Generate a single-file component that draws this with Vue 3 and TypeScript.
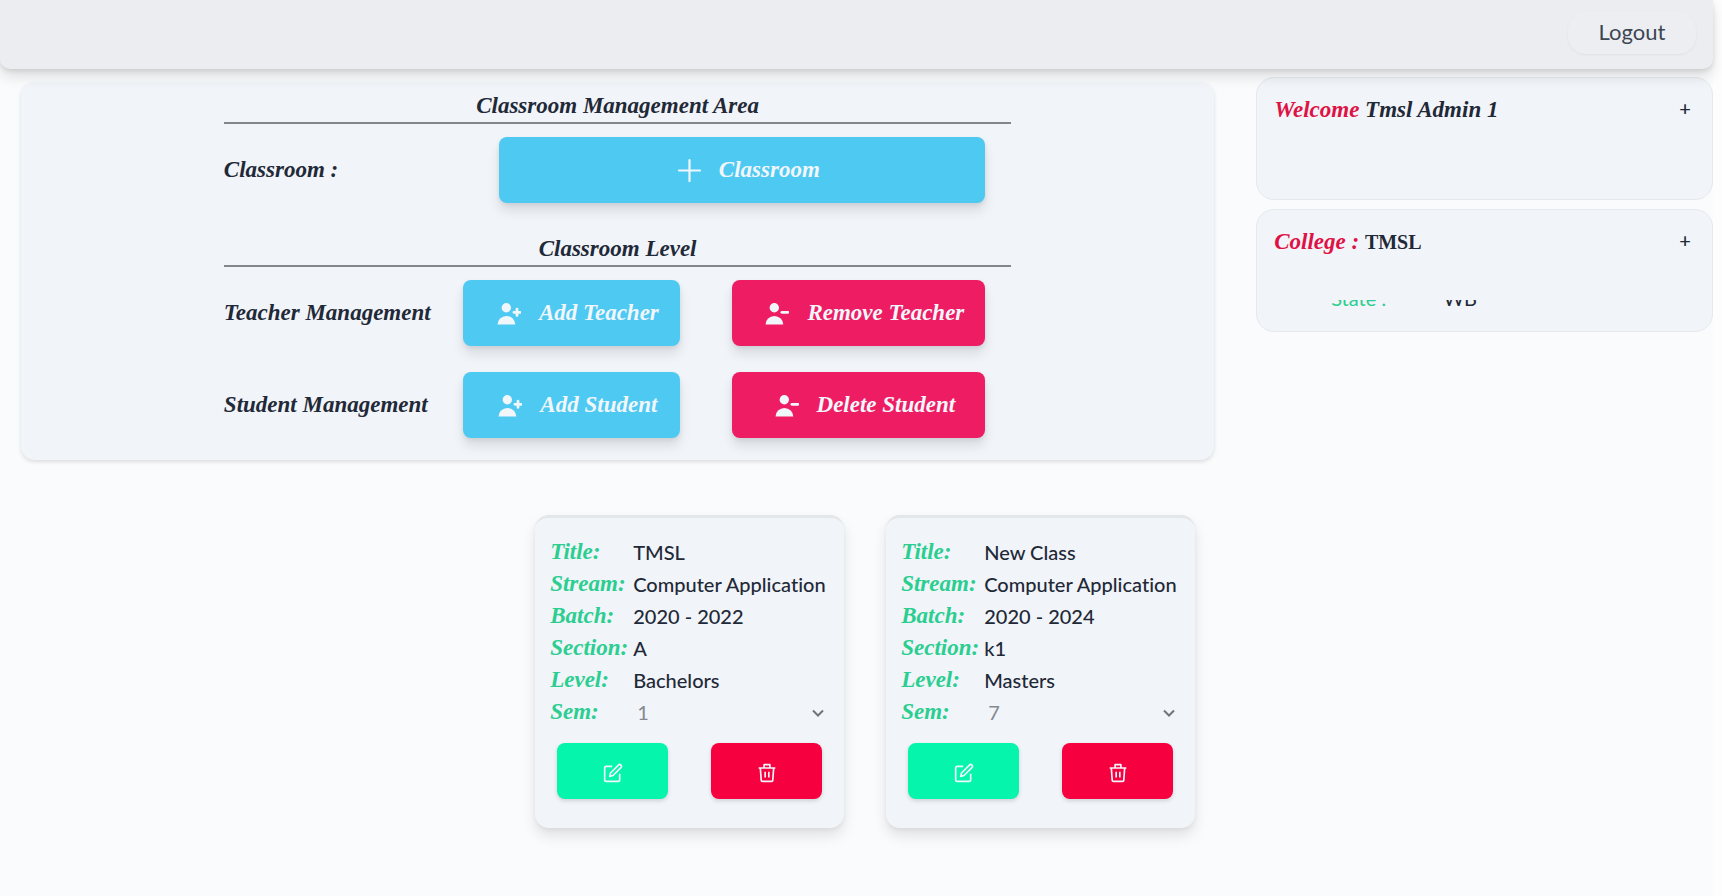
<script setup lang="ts">
import { ref } from 'vue'

interface Classroom {
  id: number
  title: string
  stream: string
  batch: string
  section: string
  level: string
  sem: number
}

const semesters = [1, 2, 3, 4, 5, 6, 7, 8]

const classrooms = ref<Classroom[]>([
  { id: 1, title: 'TMSL', stream: 'Computer Application', batch: '2020 - 2022', section: 'A', level: 'Bachelors', sem: 1 },
  { id: 2, title: 'New Class', stream: 'Computer Application', batch: '2020 - 2024', section: 'k1', level: 'Masters', sem: 7 },
])

const management = [
  { label: 'Teacher Management', add: 'Add Teacher', remove: 'Remove Teacher' },
  { label: 'Student Management', add: 'Add Student', remove: 'Delete Student' },
]
</script>

<template>
  <div class="page">
    <header class="topbar">
      <button type="button" class="logout">Logout</button>
    </header>

    <div class="columns">
      <main class="content">
        <section class="panel">
          <div class="panel-inner">
            <h2 class="heading">Classroom Management Area</h2>
            <div class="row">
              <span class="row-label">Classroom :</span>
              <button type="button" class="action add wide">
                <svg class="icon" viewBox="0 0 24 24" aria-hidden="true">
                  <path d="M12.500 2v21M2 12.500h21" fill="none" stroke="currentColor" stroke-width="2.200" stroke-linecap="round" />
                </svg>
                Classroom
              </button>
            </div>

            <h2 class="heading">Classroom Level</h2>
            <div v-for="item in management" :key="item.label" class="row">
              <span class="row-label">{{ item.label }}</span>
              <button type="button" class="action add">
                <svg class="icon" viewBox="0 0 24 24" aria-hidden="true">
                  <circle cx="9.300" cy="6.700" r="4.700" />
                  <path d="M.5 23.500a8.900 8.600 0 0 1 17.800 0z" />
                  <path d="M20 8.200v6.200M16.900 11.300h6.200" stroke="currentColor" stroke-width="2.800" stroke-linecap="round" />
                </svg>
                {{ item.add }}
              </button>
              <button type="button" class="action remove">
                <svg class="icon" viewBox="0 0 24 24" aria-hidden="true">
                  <circle cx="9.300" cy="6.700" r="4.700" />
                  <path d="M.5 23.500a8.900 8.600 0 0 1 17.800 0z" />
                  <path d="M16.900 11.300h6" stroke="currentColor" stroke-width="2.800" stroke-linecap="round" />
                </svg>
                {{ item.remove }}
              </button>
            </div>
          </div>
        </section>

        <section class="cards">
          <article v-for="room in classrooms" :key="room.id" class="card">
            <dl class="facts">
              <dt>Title:</dt><dd>{{ room.title }}</dd>
              <dt>Stream:</dt><dd>{{ room.stream }}</dd>
              <dt>Batch:</dt><dd>{{ room.batch }}</dd>
              <dt>Section:</dt><dd>{{ room.section }}</dd>
              <dt>Level:</dt><dd>{{ room.level }}</dd>
              <dt><label :for="`sem-${room.id}`">Sem:</label></dt>
              <dd class="select-wrap">
                <select :id="`sem-${room.id}`" v-model="room.sem">
                  <option v-for="n in semesters" :key="n" :value="n">{{ n }}</option>
                </select>
                <svg class="chevron" viewBox="0 0 12 12" aria-hidden="true">
                  <path d="M1 3.500 6 8.500l5-5" fill="none" stroke="currentColor" stroke-width="2" />
                </svg>
              </dd>
            </dl>
            <div class="card-actions">
              <button type="button" class="square edit" aria-label="Edit classroom">
                <svg viewBox="0 0 24 24" aria-hidden="true">
                  <path d="M11 4H4a2 2 0 0 0-2 2v14a2 2 0 0 0 2 2h14a2 2 0 0 0 2-2v-7" />
                  <path d="M18.500 2.500a2.100 2.100 0 0 1 3 3L12 15l-4 1 1-4z" />
                </svg>
              </button>
              <button type="button" class="square delete" aria-label="Delete classroom">
                <svg viewBox="0 0 24 24" aria-hidden="true">
                  <path d="M2 6h20M4 6l1 14a2 2 0 0 0 2 2h10a2 2 0 0 0 2-2l1-14M8.500 6V2h7v4M9.800 10.500v7M14.200 10.500v7" />
                </svg>
              </button>
            </div>
          </article>
        </section>
      </main>

      <aside class="side">
        <section class="info">
          <div class="info-head">
            <h3><em>Welcome</em> Tmsl Admin 1</h3>
            <button type="button" class="expand" aria-label="Show profile">+</button>
          </div>
        </section>
        <section class="info">
          <div class="info-head">
            <h3><em>College :</em> <span class="upright">TMSL</span></h3>
            <button type="button" class="expand" aria-label="Show college">+</button>
          </div>
          <div class="info-body">
            <span class="key">State :</span>
            <span>WB</span>
          </div>
        </section>
      </aside>
    </div>
  </div>
</template>

<style>
body {
  background: #fafcfd;
}
</style>

<style scoped>
.page {
  --serif: "Liberation Serif", "DejaVu Serif", serif;
  --sans: Lato, "Open Sans", sans-serif;
  box-sizing: border-box;
  min-height: 100vh;
  padding-right: 9px;
  background: linear-gradient(to left, #fdfdfe 9px, #fafbfd 9px);
  color: #1f2937;
  font-family: var(--sans);
  font-size: 20px;
  font-variant-ligatures: none;
}

.page *,
.page *::before {
  box-sizing: border-box;
}

button {
  border: 0;
  padding: 0;
  font: inherit;
  cursor: pointer;
}

.topbar {
  position: relative;
  display: flex;
  justify-content: flex-end;
  height: 69px;
  padding: 12px 17px;
  border-radius: 0 0 10px 10px;
  background: #ecedf1;
  box-shadow: 0 8px 14px rgba(0, 0, 0, 0.11), 0 2px 5px rgba(0, 0, 0, 0.1);
}

.logout {
  width: 128px;
  height: 42px;
  padding-bottom: 4px;
  border-radius: 18px;
  background: #edeef2;
  box-shadow: 0 1px 3px rgba(0, 0, 0, 0.05);
  color: #3d4653;
  font-size: 22px;
}

.columns {
  display: grid;
  grid-template-columns: 11fr 4fr;
}

.content {
  padding: 13px 42px 20px 21px;
}

.panel {
  padding: 11px 0 22px;
  border-radius: 14px;
  background: #f1f4f9;
  box-shadow: 0 2px 4px rgba(0, 0, 0, 0.12);
}

.panel-inner {
  width: 66%;
  margin: 0 auto;
  font-family: var(--serif);
  font-size: 23px;
  font-style: italic;
  font-weight: 600;
}

.heading {
  margin: 0;
  padding-bottom: 3px;
  border-bottom: 2px solid #82868c;
  font: inherit;
  line-height: 26px;
  text-align: center;
}

.heading ~ .heading {
  margin-top: 33px;
}

.row {
  display: flex;
  align-items: center;
  margin: 13px 26px 0 0;
}

.row + .row {
  margin-top: 26px;
}

.row-label {
  flex: 1;
  white-space: nowrap;
}

.action {
  display: flex;
  align-items: center;
  justify-content: center;
  width: 217px;
  height: 66px;
  padding-left: 12px;
  border-radius: 8px;
  box-shadow: 0 8px 12px rgba(0, 0, 0, 0.1), 0 2px 4px rgba(0, 0, 0, 0.07);
  color: #f1f6fb;
}

.action.add {
  background: #4dc9f2;
}

.action.remove {
  width: 253px;
  margin-left: 52px;
  background: #ed1c63;
}

.action.wide {
  width: 486px;
}

.icon {
  width: 24px;
  height: 24px;
  margin-right: 18px;
  fill: currentColor;
}

.cards {
  display: flex;
  justify-content: flex-end;
  gap: 42px;
  padding: 55px 19px 0 0;
}

.card {
  width: 309px;
  padding: 18px 15px 29px;
  border-top: 3px solid #e3e7ea;
  border-radius: 14px;
  background: #f1f4f9;
  box-shadow: 0 8px 14px rgba(0, 0, 0, 0.1), 0 2px 4px rgba(0, 0, 0, 0.05);
}

.facts {
  display: grid;
  grid-template-columns: 83px 1fr;
  margin: 0;
  line-height: 32px;
}

dt {
  color: #2bce90;
  font-family: var(--serif);
  font-size: 23px;
  font-style: italic;
  font-weight: 600;
}

dd {
  margin: 0;
  font-weight: 500;
  white-space: nowrap;
}

.select-wrap {
  position: relative;
}

select {
  width: 100%;
  height: 32px;
  padding: 0 4px;
  border: 0;
  background: transparent;
  color: #858990;
  font: inherit;
  font-weight: 400;
  appearance: none;
}

.chevron {
  position: absolute;
  top: 11px;
  right: 5px;
  width: 12px;
  height: 12px;
  color: #6f7479;
  pointer-events: none;
}

.card-actions {
  display: flex;
  justify-content: space-between;
  padding: 15px 7px 0;
}

.square {
  display: grid;
  place-items: center;
  width: 111px;
  height: 56px;
  padding-top: 4px;
  border-radius: 8px;
  box-shadow: 0 2px 4px rgba(0, 0, 0, 0.14);
  color: #f1f6fb;
}

.square svg {
  width: 20px;
  height: 20px;
  fill: none;
  stroke: currentColor;
  stroke-width: 2;
  stroke-linejoin: round;
}

.edit {
  background: #05f5ad;
}

.delete {
  background: #f70040;
}

.side {
  display: grid;
  align-content: start;
  gap: 9px;
  padding-top: 8px;
}

.info {
  height: 123px;
  padding: 18px 17px 0;
  border: 1px solid #e5e8ec;
  border-radius: 18px;
  background: #f1f4f9;
}

.info-head {
  display: flex;
  justify-content: space-between;
  line-height: 28px;
}

h3 {
  margin: 0;
  font-family: var(--serif);
  font-size: 23px;
  font-style: italic;
  font-weight: 600;
}

h3 em {
  color: #de1244;
}

.upright {
  font-size: 20px;
  font-style: normal;
}

.expand {
  width: 20px;
  height: 24px;
  background: none;
  color: #1f2937;
  font-weight: 500;
  line-height: 20px;
}

.info-body {
  display: flex;
  align-items: flex-end;
  gap: 57px;
  height: 8px;
  margin: 44px 57px 0;
  overflow: hidden;
  line-height: 20px;
}

.key {
  color: #2bce90;
}
</style>
